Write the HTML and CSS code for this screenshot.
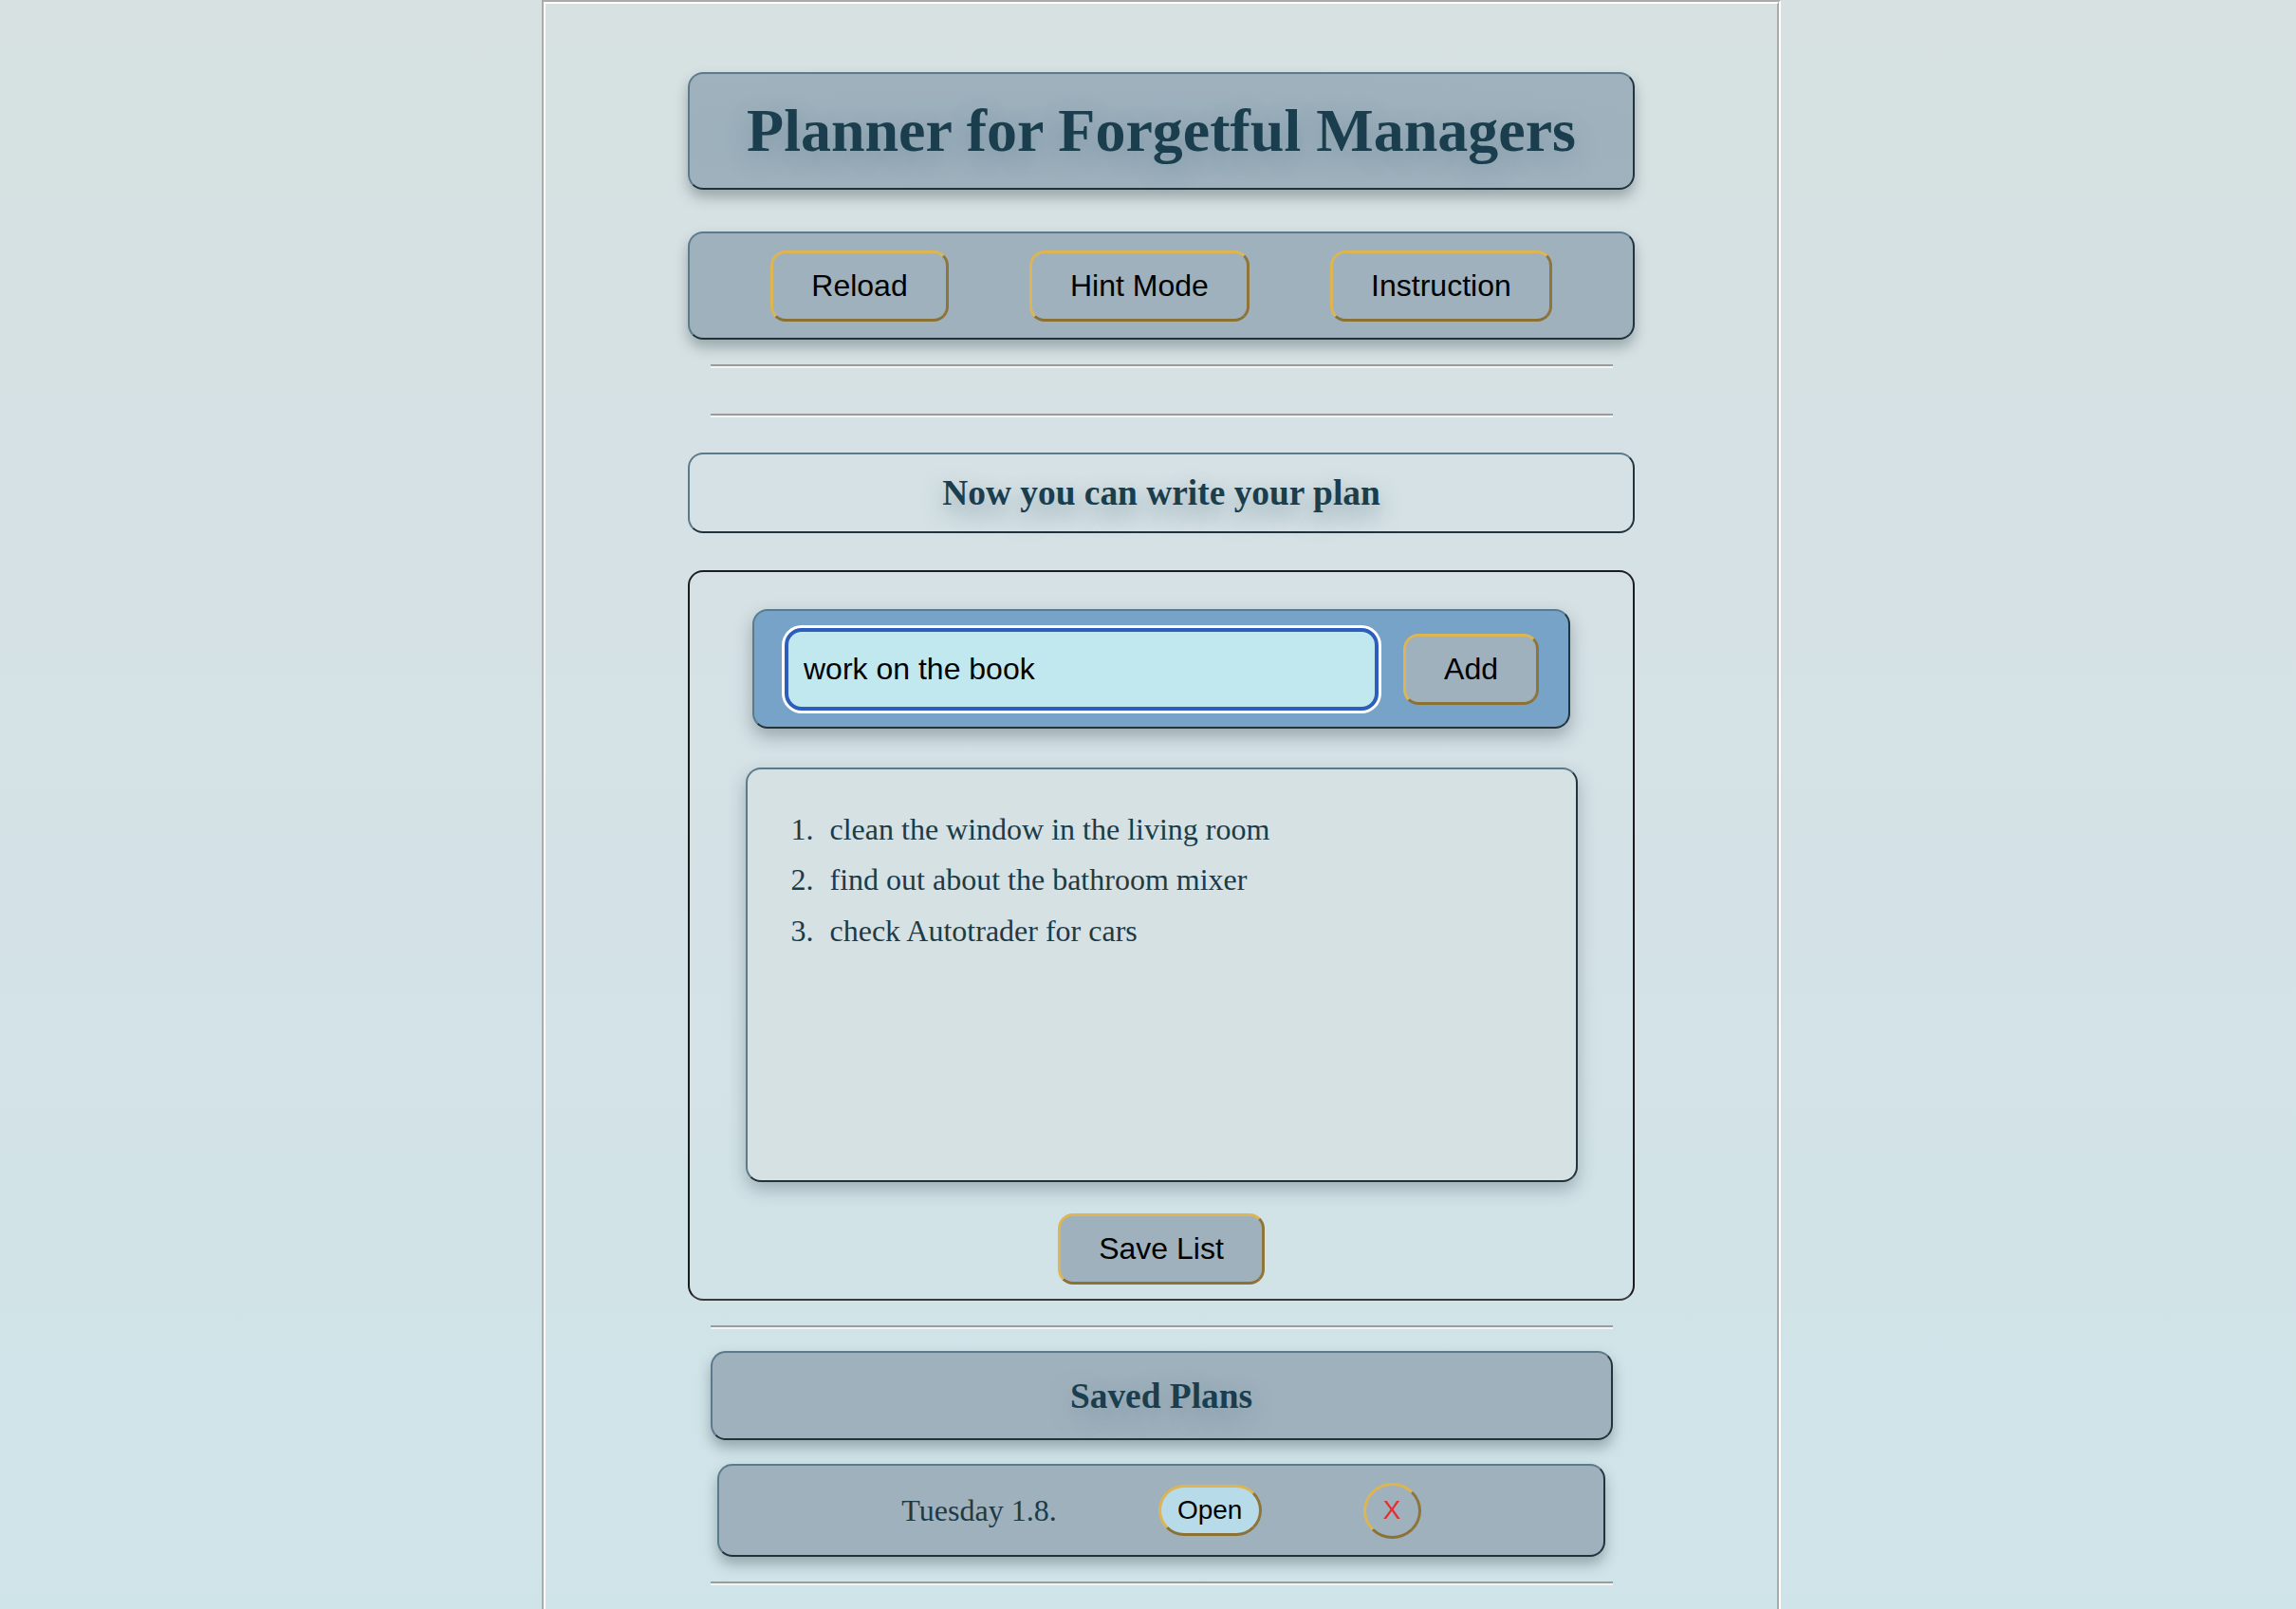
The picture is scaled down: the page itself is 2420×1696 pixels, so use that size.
FILE: index.html
```html
<!DOCTYPE html>
<html lang="en">
<head>
<meta charset="utf-8">
<title>Planner for Forgetful Managers</title>
<link rel="stylesheet" href="styles.css">
</head>
<body>
<div class="page">
  <header class="title-box">
    <h1 class="title">Planner for Forgetful Managers</h1>
  </header>

  <nav class="toolbar">
    <button class="btn">Reload</button>
    <button class="btn">Hint Mode</button>
    <button class="btn">Instruction</button>
  </nav>

  <hr class="rule rule-1">
  <hr class="rule rule-2">

  <div class="notice">
    <h3 class="notice-text">Now you can write your plan</h3>
  </div>

  <section class="card">
    <div class="entry">
      <input class="entry-input" type="text" value="work on the book">
      <button class="btn add-btn">Add</button>
    </div>

    <div class="list-box">
      <ol class="plan-list">
        <li>clean the window in the living room</li>
        <li>find out about the bathroom mixer</li>
        <li>check Autotrader for cars</li>
      </ol>
    </div>

    <button class="btn save-btn">Save List</button>
  </section>

  <hr class="rule rule-3">

  <div class="saved-head">
    <h3 class="notice-text">Saved Plans</h3>
  </div>

  <div class="saved-row">
    <span class="saved-name">Tuesday 1.8.</span>
    <button class="btn-small open-btn">Open</button>
    <button class="btn-small del-btn">X</button>
  </div>

  <hr class="rule rule-4">
</div>
</body>
</html>
```

FILE: styles.css
```css
html, body {
  margin: 0;
  padding: 0;
  height: 100%;
  overflow: hidden;
}

body {
  background: linear-gradient(to bottom, #d7e1e2 0%, #d5e1e5 40%, #cfe4e9 100%);
  font-family: "Liberation Serif", "Times New Roman", serif;
}

.page {
  box-sizing: border-box;
  margin-left: 571px;
  width: 1306px;
  min-height: 1760px;
  border: 4px groove #ffffff;
  border-bottom: none;
  padding-top: 72px;
}

/* shared box look */
.title-box,
.toolbar,
.notice,
.entry,
.list-box,
.saved-head,
.saved-row {
  box-sizing: border-box;
  border: 2px solid;
  border-color: #5b7a8c #24343d #22323b #5b7a8c;
  border-radius: 16px;
}

.title-box {
  width: 998px;
  margin: 0 auto;
  padding: 23px 0;
  background: radial-gradient(ellipse at 40% 55%, #99adba 0%, #9eb1bd 60%, #a0b2bd 100%);
  box-shadow: 0 8px 14px rgba(40, 60, 70, 0.35);
  text-align: center;
}

.title {
  margin: 0;
  font-size: 64px;
  line-height: 74px;
  font-weight: bold;
  color: #1a3e4d;
  text-shadow: 0 8px 26px rgba(70, 100, 120, 0.3);
}

.toolbar {
  width: 998px;
  margin: 44px auto 0;
  padding: 17.5px 0;
  background: #9fb1bd;
  box-shadow: 0 8px 14px rgba(40, 60, 70, 0.35);
  display: flex;
  justify-content: space-evenly;
  align-items: center;
}

.btn {
  box-sizing: border-box;
  height: 75px;
  padding: 0 40px;
  font-family: "Liberation Sans", Arial, Helvetica, sans-serif;
  font-size: 32px;
  color: #000;
  background: #9fb1bd;
  border: 3px solid;
  border-color: #ddb553 #8f7538 #8b7133 #ddb553;
  border-radius: 16px;
}

.rule {
  box-sizing: border-box;
  width: 951px;
  height: 4px;
  margin: 0 auto;
  border: none;
  border-top: 2px solid #9b9b9b;
  border-bottom: 2px solid #f2f5f5;
}

.rule-1 { margin-top: 26px; }
.rule-2 { margin-top: 48px; }
.rule-3 { margin-top: 26px; }
.rule-4 { margin-top: 26px; }

.notice {
  width: 998px;
  margin: 37px auto 0;
  padding: 19px 0;
  text-align: center;
}

.notice-text {
  margin: 0;
  font-size: 37.4px;
  line-height: 43px;
  font-weight: bold;
  color: #1a3e4d;
  text-shadow: 0 10px 22px rgba(80, 115, 135, 0.55);
}

.card {
  box-sizing: border-box;
  width: 998px;
  margin: 39px auto 0;
  padding: 39px 0 15px;
  border: 2px solid #1c1c1c;
  border-bottom-color: #3a3a3a;
  border-radius: 16px;
  display: flex;
  flex-direction: column;
  align-items: center;
}

.entry {
  width: 862px;
  padding: 17.5px 31px 17.5px 32px;
  background: #76a3c7;
  box-shadow: 0 8px 18px rgba(40, 60, 70, 0.35);
  display: flex;
  align-items: center;
  gap: 26px;
}

.entry-input {
  box-sizing: border-box;
  flex: 0 0 626px;
  width: 626px;
  height: 87px;
  padding: 0 16px;
  font-family: "Liberation Sans", Arial, Helvetica, sans-serif;
  font-size: 32px;
  color: #000;
  background: #c2e8ef;
  border: 4px solid #2d5dbd;
  border-radius: 18px;
  box-shadow: 0 0 0 3px #ffffff;
  outline: none;
}

.add-btn {
  flex: 0 0 143px;
  padding: 0;
}

.list-box {
  width: 877px;
  height: 437px;
  margin-top: 41px;
  background: #d6e1e3;
  box-shadow: 0 8px 18px rgba(40, 60, 70, 0.3);
}

.plan-list {
  list-style: none;
  counter-reset: item;
  margin: 0;
  padding: 37px 0 0 46px;
  font-size: 32px;
  line-height: 53.4px;
  color: #1c3b49;
}

.plan-list li {
  counter-increment: item;
}

.plan-list li::before {
  content: counter(item) ".";
  display: inline-block;
  width: 41px;
}

.save-btn {
  margin-top: 33px;
}

.saved-head {
  width: 951px;
  margin: 23px auto 0;
  padding: 23.5px 0;
  background: #9fb1bd;
  box-shadow: 0 8px 14px rgba(40, 60, 70, 0.35);
  text-align: center;
}

.saved-head .notice-text {
  text-shadow: 0 8px 26px rgba(80, 110, 130, 0.35);
}

.saved-row {
  width: 936px;
  height: 98px;
  margin: 25px auto 0;
  background: #9fb1bd;
  box-shadow: 0 8px 14px rgba(40, 60, 70, 0.35);
  display: flex;
  justify-content: center;
  align-items: center;
  gap: 107px;
}

.saved-name {
  font-size: 32px;
  color: #1c3b49;
}

.btn-small {
  box-sizing: border-box;
  font-family: "Liberation Sans", Arial, Helvetica, sans-serif;
  font-size: 28px;
  border: 3px solid;
  border-color: #ddb553 #8f7538 #8b7133 #ddb553;
  padding: 0;
}

.open-btn {
  width: 109px;
  height: 54px;
  border-radius: 27px;
  background: #b7dbe8;
  color: #000;
}

.del-btn {
  width: 61px;
  height: 59px;
  border-radius: 50%;
  background: transparent;
  color: #e53030;
}
```
